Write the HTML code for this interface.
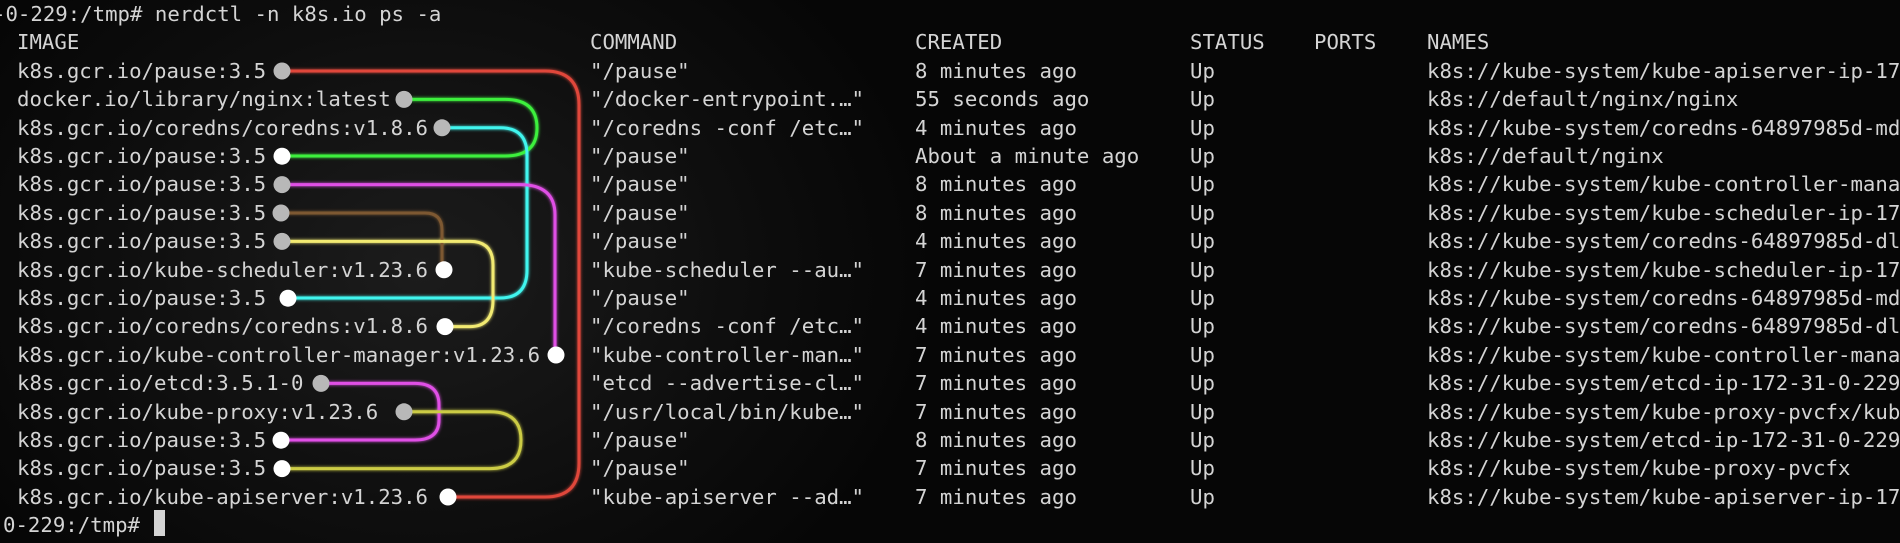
<!DOCTYPE html>
<html><head><meta charset="utf-8"><style>
html,body{margin:0;padding:0;width:1900px;height:543px;overflow:hidden;background:#060606}
body{position:relative;background:radial-gradient(ellipse 520px 420px at 420px 270px,#1c1c1c 0%,#0e0e0e 60%,#060606 100%)}
#wrap{position:absolute;left:0;top:0;width:1900px;height:543px;overflow:hidden}
pre{position:absolute;margin:0;font-family:"DejaVu Sans Mono","Liberation Mono",monospace;font-size:20.7px;line-height:28.4px;color:#d4d4d4;white-space:pre}
svg{position:absolute;left:0;top:0}
.cur{position:absolute;left:154px;top:510px;width:11px;height:26px;background:#d4d4d4}
</style></head><body><div id="wrap">
<pre style="left:-7px;top:0">-0-229:/tmp# nerdctl -n k8s.io ps -a</pre>
<pre style="left:17px;top:28.4px">IMAGE
k8s.gcr.io/pause:3.5
docker.io/library/nginx:latest
k8s.gcr.io/coredns/coredns:v1.8.6
k8s.gcr.io/pause:3.5
k8s.gcr.io/pause:3.5
k8s.gcr.io/pause:3.5
k8s.gcr.io/pause:3.5
k8s.gcr.io/kube-scheduler:v1.23.6
k8s.gcr.io/pause:3.5
k8s.gcr.io/coredns/coredns:v1.8.6
k8s.gcr.io/kube-controller-manager:v1.23.6
k8s.gcr.io/etcd:3.5.1-0
k8s.gcr.io/kube-proxy:v1.23.6
k8s.gcr.io/pause:3.5
k8s.gcr.io/pause:3.5
k8s.gcr.io/kube-apiserver:v1.23.6</pre>
<pre style="left:590px;top:28.4px">COMMAND
"/pause"
"/docker-entrypoint.…"
"/coredns -conf /etc…"
"/pause"
"/pause"
"/pause"
"/pause"
"kube-scheduler --au…"
"/pause"
"/coredns -conf /etc…"
"kube-controller-man…"
"etcd --advertise-cl…"
"/usr/local/bin/kube…"
"/pause"
"/pause"
"kube-apiserver --ad…"</pre>
<pre style="left:915px;top:28.4px">CREATED
8 minutes ago
55 seconds ago
4 minutes ago
About a minute ago
8 minutes ago
8 minutes ago
4 minutes ago
7 minutes ago
4 minutes ago
4 minutes ago
7 minutes ago
7 minutes ago
7 minutes ago
8 minutes ago
7 minutes ago
7 minutes ago</pre>
<pre style="left:1190px;top:28.4px">STATUS
Up
Up
Up
Up
Up
Up
Up
Up
Up
Up
Up
Up
Up
Up
Up
Up</pre>
<pre style="left:1314px;top:28.4px">PORTS</pre>
<pre style="left:1427px;top:28.4px">NAMES
k8s://kube-system/kube-apiserver-ip-17
k8s://default/nginx/nginx
k8s://kube-system/coredns-64897985d-md
k8s://default/nginx
k8s://kube-system/kube-controller-mana
k8s://kube-system/kube-scheduler-ip-17
k8s://kube-system/coredns-64897985d-dl
k8s://kube-system/kube-scheduler-ip-17
k8s://kube-system/coredns-64897985d-md
k8s://kube-system/coredns-64897985d-dl
k8s://kube-system/kube-controller-mana
k8s://kube-system/etcd-ip-172-31-0-229
k8s://kube-system/kube-proxy-pvcfx/kub
k8s://kube-system/etcd-ip-172-31-0-229
k8s://kube-system/kube-proxy-pvcfx
k8s://kube-system/kube-apiserver-ip-17</pre>
<pre style="left:3px;top:511.2px">0-229:/tmp#</pre>
<div class="cur"></div>
<svg width="1900" height="543" viewBox="0 0 1900 543">
<defs><filter id="g" x="-20%" y="-20%" width="140%" height="140%"><feGaussianBlur stdDeviation="1.5" result="b"/><feMerge><feMergeNode in="b"/><feMergeNode in="SourceGraphic"/></feMerge></filter></defs>
<g fill="none" stroke-width="3" stroke-linecap="round" filter="url(#g)">
<path stroke="#e0473a" d="M282,71 H545 Q579,71 579,105 V463 Q579,497 545,497 H448"/>
<path stroke="#3ef03e" d="M404,99.4 H505 Q537,99.4 537,128 Q537,156 505,156 H282"/>
<path stroke="#40f5ee" d="M442,127.8 H500 Q527,127.8 527,155 V270 Q527,298 500,298 H288"/>
<path stroke="#e050e6" d="M282,184.6 H520 Q555,184.6 555,215 V355"/>
<path stroke="#7d5830" d="M281,213 H425 Q442,213 442,230 V269.8"/>
<path stroke="#f2ea72" d="M282,241.4 H470 Q493,241.4 493,265 V300 Q493,326.6 470,326.6 H445"/>
<path stroke="#e050e6" d="M321,383.4 H415 Q439,383.4 439,405 V420 Q439,440 415,440 H281"/>
<path stroke="#cccc44" d="M404,411.8 H490 Q521,411.8 521,440 Q521,468.6 490,468.6 H282"/>
</g>
<g fill="#b8b8b8">
<circle cx="282" cy="71" r="8.5"/><circle cx="404" cy="99.4" r="8.5"/><circle cx="442" cy="127.8" r="8.5"/>
<circle cx="282" cy="184.6" r="8.5"/><circle cx="281" cy="213" r="8.5"/><circle cx="282" cy="241.4" r="8.5"/>
<circle cx="321" cy="383.4" r="8.5"/><circle cx="404" cy="411.8" r="8.5"/>
</g>
<g fill="#ffffff">
<circle cx="282" cy="156.2" r="8.5"/><circle cx="444" cy="269.8" r="8.5"/><circle cx="288" cy="298.2" r="8.5"/>
<circle cx="445" cy="326.6" r="8.5"/><circle cx="556" cy="355" r="8.5"/><circle cx="281" cy="440.2" r="8.5"/>
<circle cx="282" cy="468.6" r="8.5"/><circle cx="448" cy="497" r="8.5"/>
</g>
</svg>
</div></body></html>
